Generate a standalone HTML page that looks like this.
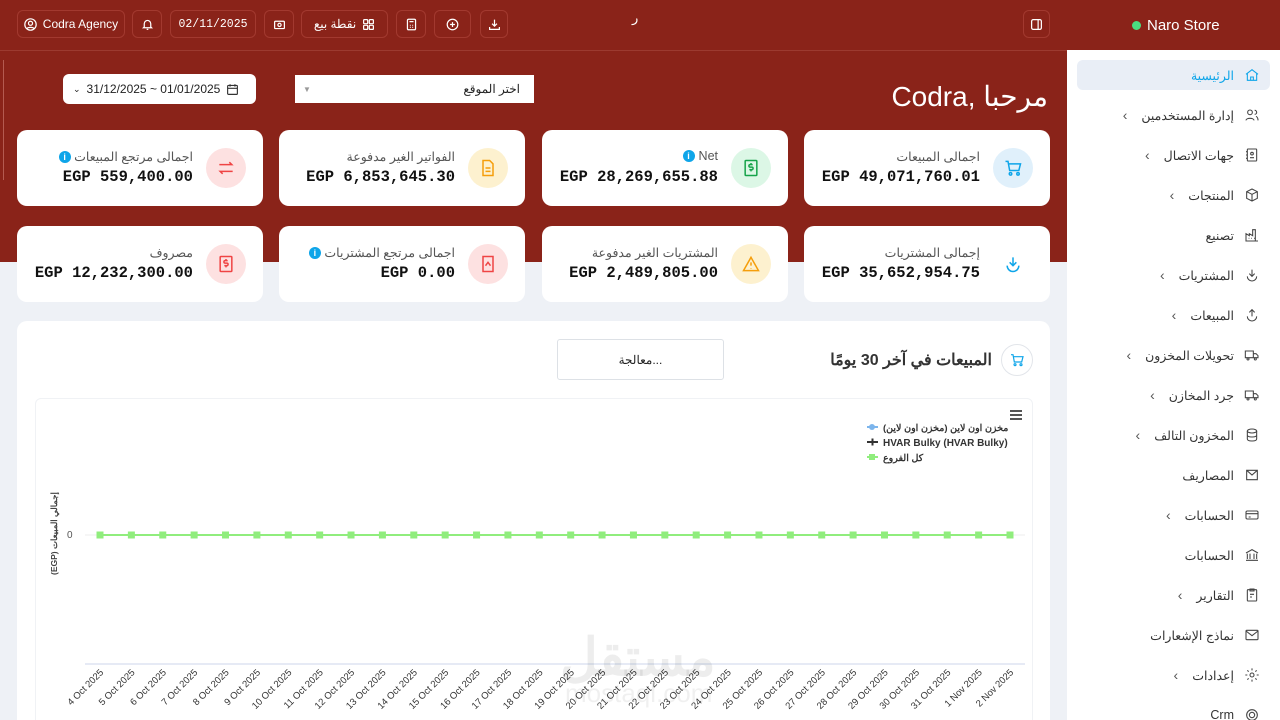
<!DOCTYPE html><html><head><meta charset="utf-8"><style>
*{box-sizing:border-box;margin:0;padding:0}
html,body{width:1280px;height:720px;overflow:hidden}
body{background:#eef1f6;font-family:"Liberation Sans","Noto Sans CJK SC",sans-serif;position:relative}
.red{position:absolute;left:0;top:0;width:1067px;height:262px;background:#8a2319}
.topline{position:absolute;left:0;top:50px;width:1067px;height:1px;background:#9c3a30}
.tb{position:absolute;top:10px;height:28px;border:1px solid #a2392f;border-radius:6px;color:#fff;font-size:12px;display:flex;align-items:center;justify-content:center;gap:6px}
.side{position:absolute;left:1067px;top:0;width:213px;height:720px;background:#fff}
.sideh{position:absolute;left:1067px;top:0;width:213px;height:50px;background:#8a2319;color:#fff;font-size:15px;display:flex;align-items:center;padding-left:65px}
.dot{width:9px;height:9px;border-radius:50%;background:#4ade80;margin-right:6px}
.mi{position:absolute;left:1077px;width:193px;height:30px;direction:rtl;display:flex;align-items:center;padding-right:10px;font-size:12.5px;color:#333;gap:10px}
.mi svg{width:16px;height:16px;stroke:#444;fill:none;stroke-width:1.6}
.mi .ch{color:#555;margin-right:4px;font-size:14px}
.card{position:absolute;width:246px;height:76px;background:#fff;border-radius:10px;direction:rtl}
.card .ic{position:absolute;right:17px;top:18px;width:40px;height:40px;border-radius:50%;display:flex;align-items:center;justify-content:center}
.card .lb{position:absolute;right:70px;top:19px;font-size:12.5px;color:#555}
.card .vl{position:absolute;right:70px;top:38px;font-size:15.5px;font-weight:bold;font-family:"Liberation Mono",monospace;color:#111;direction:ltr}
.ic svg{width:20px;height:20px;fill:none;stroke-width:1.8}
.info{display:inline-block;width:12px;height:12px;border-radius:50%;background:#0ea5e9;color:#fff;font-size:9px;text-align:center;line-height:12px;font-weight:bold;margin-left:4px;vertical-align:1px}
.panel{position:absolute;left:17px;top:321px;width:1033px;height:399px;background:#fff;border-radius:10px 10px 0 0}
</style></head><body>
<div class="red"></div><div class="topline"></div>
<div style="position:absolute;left:3px;top:60px;width:1px;height:120px;background:#b45a50"></div>
<div class="tb" style="left:17px;width:108px"><svg width="13" height="13" viewBox="0 0 16 16" fill="none" stroke="#fff" stroke-width="1.5"><circle cx="8" cy="8" r="7"/><circle cx="8" cy="6.5" r="2.5"/><path d="M3.5 13c1.5-2 7.5-2 9 0"/></svg>Codra Agency</div>
<div class="tb" style="left:132px;width:30px"><svg width="13" height="13" viewBox="0 0 16 16" fill="none" stroke="#fff" stroke-width="1.5"><path d="M4 11V7a4 4 0 018 0v4l1 1H3zM7 14h2"/></svg></div>
<div class="tb" style="left:170px;width:86px;font-family:'Liberation Mono',monospace;font-size:11.5px">02/11/2025</div>
<div class="tb" style="left:264px;width:30px"><svg width="13" height="13" viewBox="0 0 16 16" fill="none" stroke="#fff" stroke-width="1.5"><rect x="2" y="4" width="12" height="9" rx="1"/><circle cx="8" cy="8.5" r="2"/></svg></div>
<div class="tb" style="left:301px;width:87px">نقطة بيع <svg width="13" height="13" viewBox="0 0 16 16" fill="none" stroke="#fff" stroke-width="1.5"><rect x="2" y="2" width="5" height="5" rx="1"/><rect x="9" y="2" width="5" height="5" rx="1"/><rect x="2" y="9" width="5" height="5" rx="1"/><rect x="9" y="9" width="5" height="5" rx="1"/></svg></div>
<div class="tb" style="left:396px;width:30px"><svg width="13" height="13" viewBox="0 0 16 16" fill="none" stroke="#fff" stroke-width="1.5"><rect x="3" y="1.5" width="10" height="13" rx="1.5"/><path d="M5.5 4.5h5M6 9h1M9 9h1M6 11.5h1M9 11.5h1"/></svg></div>
<div class="tb" style="left:434px;width:37px"><svg width="13" height="13" viewBox="0 0 16 16" fill="none" stroke="#fff" stroke-width="1.5"><circle cx="8" cy="8" r="6.5"/><path d="M8 5v6M5 8h6"/></svg></div>
<div class="tb" style="left:480px;width:28px"><svg width="13" height="13" viewBox="0 0 16 16" fill="none" stroke="#fff" stroke-width="1.5"><path d="M8 2v8M5 7l3 3 3-3M2 11v3h12v-3"/></svg></div>
<div style="position:absolute;left:632px;top:10px;color:#fff;font-size:13px">ر</div>
<div class="tb" style="left:1023px;width:27px"><svg width="13" height="13" viewBox="0 0 16 16" fill="none" stroke="#fff" stroke-width="1.5"><rect x="2" y="2" width="12" height="12" rx="2"/><path d="M10 2v12"/></svg></div>

<div style="position:absolute;left:63px;top:74px;width:193px;height:30px;background:#fff;border-radius:6px;font-size:12px;color:#222;display:flex;align-items:center;gap:6px;padding-left:10px"><span style="font-size:9px">⌄</span>31/12/2025 ~ 01/01/2025 <svg width="13" height="13" viewBox="0 0 16 16" fill="none" stroke="#333" stroke-width="1.4"><rect x="2" y="3" width="12" height="11" rx="1"/><path d="M2 6.5h12M5 1.5v3M11 1.5v3"/></svg></div>
<div style="position:absolute;left:295px;top:75px;width:239px;height:28px;background:#fff;font-size:12px;color:#222;direction:rtl;display:flex;align-items:center;justify-content:space-between;padding:0 14px 0 8px"><span>اختر الموقع</span><span style="font-size:8px;color:#999">▼</span></div>
<div style="position:absolute;right:232px;top:80px;color:#fff;font-size:28px;direction:rtl">مرحبا ,Codra</div>

<div class="card" style="left:804px;top:130px"><div class="ic" style="background:#e0f0fb"><svg viewBox="0 0 24 24" stroke="#0ea5e9"><path d="M3 4h3l2 11h11l2-8H7"/><circle cx="9" cy="19" r="1.5"/><circle cx="18" cy="19" r="1.5"/></svg></div><div class="lb">اجمالى المبيعات</div><div class="vl">EGP 49,071,760.01</div></div>
<div class="card" style="left:542px;top:130px"><div class="ic" style="background:#dcf7e6"><svg viewBox="0 0 24 24" stroke="#16a34a"><rect x="5" y="3" width="14" height="18" rx="1"/><path d="M14 8h-3a1.5 1.5 0 000 3h2a1.5 1.5 0 010 3h-3M12 6v2M12 14v2"/></svg></div><div class="lb">Net<span class="info" style="margin-left:0;margin-right:4px">i</span></div><div class="vl">EGP 28,269,655.88</div></div>
<div class="card" style="left:279px;top:130px"><div class="ic" style="background:#fdf1cf"><svg viewBox="0 0 24 24" stroke="#f59e0b"><path d="M6 3h8l4 4v14H6z"/><path d="M9 12h6M9 16h6"/></svg></div><div class="lb">الفواتير الغير مدفوعة</div><div class="vl">EGP 6,853,645.30</div></div>
<div class="card" style="left:17px;top:130px"><div class="ic" style="background:#fde1e1"><svg viewBox="0 0 24 24" stroke="#ef4444"><path d="M4 8h15l-3-3M20 16H5l3 3"/></svg></div><div class="lb">اجمالى مرتجع المبيعات <span class="info">i</span></div><div class="vl">EGP 559,400.00</div></div>

<div class="card" style="left:804px;top:226px"><div class="ic"><svg viewBox="0 0 24 24" stroke="#0ea5e9"><path d="M12 4v10M8 10l4 4 4-4M5 14a7 7 0 0014 0"/></svg></div><div class="lb">إجمالى المشتريات</div><div class="vl">EGP 35,652,954.75</div></div>
<div class="card" style="left:542px;top:226px"><div class="ic" style="background:#fdf1cf"><svg viewBox="0 0 24 24" stroke="#f59e0b"><path d="M12 4l9 16H3z"/><path d="M12 10v4M12 17v.5"/></svg></div><div class="lb">المشتريات الغير مدفوعة</div><div class="vl">EGP 2,489,805.00</div></div>
<div class="card" style="left:279px;top:226px"><div class="ic" style="background:#fde1e1"><svg viewBox="0 0 24 24" stroke="#ef4444"><path d="M6 3h12v18H6z"/><path d="M9 14l3-4 3 4"/></svg></div><div class="lb">اجمالى مرتجع المشتريات <span class="info">i</span></div><div class="vl">EGP 0.00</div></div>
<div class="card" style="left:17px;top:226px"><div class="ic" style="background:#fde1e1"><svg viewBox="0 0 24 24" stroke="#ef4444"><rect x="5" y="3" width="14" height="18" rx="1"/><path d="M14 8h-3a1.5 1.5 0 000 3h2a1.5 1.5 0 010 3h-3M12 6v2M12 14v2"/></svg></div><div class="lb">مصروف</div><div class="vl">EGP 12,232,300.00</div></div>

<div class="panel"></div>
<div style="position:absolute;left:1001px;top:344px;width:32px;height:32px;border-radius:50%;border:1px solid #e2e5ea;display:flex;align-items:center;justify-content:center"><svg width="16" height="16" viewBox="0 0 24 24" fill="none" stroke="#0ea5e9" stroke-width="1.8"><path d="M3 4h3l2 11h11l2-8H7"/><circle cx="9" cy="19" r="1.5"/><circle cx="18" cy="19" r="1.5"/></svg></div>
<div style="position:absolute;right:288px;top:350px;font-size:16px;font-weight:bold;color:#333;direction:rtl">المبيعات في آخر 30 يومًا</div>
<div style="position:absolute;left:557px;top:339px;width:167px;height:41px;border:1px solid #dde1e6;border-radius:3px;font-size:12px;color:#222;display:flex;align-items:center;justify-content:center">معالجة...</div>
<div style="position:absolute;left:35px;top:398px;width:998px;height:330px;border:1px solid #f0f2f5;border-radius:6px"></div>
<svg style="position:absolute;left:0;top:0" width="1067" height="720">
<g stroke="#555" stroke-width="2"><path d="M1010 411h12M1010 415h12M1010 419h12"/></g>
<line x1="867" y1="427" x2="878" y2="427" stroke="#7cb5ec" stroke-width="2"/><circle cx="872" cy="427" r="3" fill="#7cb5ec"/>
<line x1="867" y1="442" x2="878" y2="442" stroke="#333" stroke-width="2"/><path d="M869 442h7M872.5 438.5v7" stroke="#333" stroke-width="2"/>
<line x1="867" y1="457" x2="878" y2="457" stroke="#90ed7d" stroke-width="2"/><rect x="869" y="454" width="6" height="6" fill="#90ed7d"/>
<text x="883" y="431" font-size="9.5" font-weight="bold" fill="#333" font-family="Liberation Sans,Noto Sans CJK SC,sans-serif">مخزن اون لاين (مخزن اون لاين)</text>
<text x="883" y="446" font-size="10" font-weight="bold" fill="#333" font-family="Liberation Sans,sans-serif">HVAR Bulky (HVAR Bulky)</text>
<text x="883" y="461" font-size="9.5" font-weight="bold" fill="#333" font-family="Liberation Sans,Noto Sans CJK SC,sans-serif">كل الفروع</text>
<text x="67" y="538" font-size="10" fill="#555" font-family="Liberation Sans,sans-serif">0</text>
<text transform="translate(57,575) rotate(-90)" font-size="8.5" font-weight="bold" fill="#444" font-family="Liberation Sans,Noto Sans CJK SC,sans-serif">(EGP) إجمالي المبيعات</text>
<line x1="85" y1="535" x2="1025" y2="535" stroke="#eee"/>
<line x1="85" y1="664" x2="1025" y2="664" stroke="#ccd6eb"/>
<line x1="100" y1="535" x2="1010" y2="535" stroke="#90ed7d" stroke-width="2"/>
<g fill="#90ed7d" id="pts"></g>
<g id="lbl" font-size="9.5" fill="#333" font-family="Liberation Sans,sans-serif"></g>
</svg>
<div style="position:absolute;left:560px;top:628px;font-size:52px;font-weight:bold;color:rgba(0,0,0,0.07)">مستقل</div>
<div style="position:absolute;left:565px;top:678px;font-size:26px;color:rgba(0,0,0,0.06)">mostaql.com</div>
<div class="side"></div>
<div class="sideh"><span class="dot"></span>Naro Store</div>
<div style="position:absolute;left:1077px;top:60px;width:193px;height:30px;background:#e9eef6;border-radius:6px"></div>
<div id="menu"></div>
<script>
var labels=["4 Oct 2025","5 Oct 2025","6 Oct 2025","7 Oct 2025","8 Oct 2025","9 Oct 2025","10 Oct 2025","11 Oct 2025","12 Oct 2025","13 Oct 2025","14 Oct 2025","15 Oct 2025","16 Oct 2025","17 Oct 2025","18 Oct 2025","19 Oct 2025","20 Oct 2025","21 Oct 2025","22 Oct 2025","23 Oct 2025","24 Oct 2025","25 Oct 2025","26 Oct 2025","27 Oct 2025","28 Oct 2025","29 Oct 2025","30 Oct 2025","31 Oct 2025","1 Nov 2025","2 Nov 2025"];
var P=document.getElementById('pts'),L=document.getElementById('lbl'),ns="http://www.w3.org/2000/svg";
labels.forEach(function(t,i){var x=100+i*(910/29);var r=document.createElementNS(ns,'rect');r.setAttribute('x',x-3.5);r.setAttribute('y',531.5);r.setAttribute('width',7);r.setAttribute('height',7);P.appendChild(r);
var tx=document.createElementNS(ns,'text');tx.setAttribute('text-anchor','end');tx.setAttribute('transform','translate('+(x+4)+',673) rotate(-45)');tx.textContent=t;L.appendChild(tx);});
var items=[["الرئيسية",0,'<path d="M3 11l9-7 9 7M5 10v10h14V10M10 20v-5h4v5"/>',"#0ea5e9"],["إدارة المستخدمين",1,'<circle cx="9" cy="8" r="3.5"/><path d="M3 20c0-4 12-4 12 0M16 5a3 3 0 010 6M18 14c2 1 3 3 3 6"/>'],["جهات الاتصال",1,'<rect x="5" y="3" width="14" height="18" rx="1"/><circle cx="12" cy="10" r="2"/><path d="M9 16h6M3 7h2M3 12h2M3 17h2"/>'],["المنتجات",1,'<path d="M12 3l8 4v10l-8 4-8-4V7zM4 7l8 4 8-4M12 11v10"/>'],["تصنيع",0,'<path d="M3 21V10l5 3V10l5 3V4h4v17zM3 21h18M7 17h1M11 17h1M15 17h1"/>'],["المشتريات",1,'<path d="M12 4v10M8 10l4 4 4-4M5 14a7 7 0 0014 0"/>'],["المبيعات",1,'<path d="M12 14V4M8 8l4-4 4 4M5 14a7 7 0 0014 0"/>'],["تحويلات المخزون",1,'<path d="M2 6h12v10H2zM14 10h4l3 3v3h-7"/><circle cx="6" cy="18" r="1.5"/><circle cx="17" cy="18" r="1.5"/>'],["جرد المخازن",1,'<path d="M2 6h12v10H2zM14 10h4l3 3v3h-7"/><circle cx="6" cy="18" r="1.5"/><circle cx="17" cy="18" r="1.5"/>'],["المخزون التالف",1,'<ellipse cx="12" cy="6" rx="7" ry="3"/><path d="M5 6v12c0 4 14 4 14 0V6M5 12c0 4 14 4 14 0"/>'],["المصاريف",0,'<path d="M4 5h16v14H4zM4 5l8 7 8-7"/>'],["الحسابات",1,'<rect x="3" y="6" width="18" height="12" rx="2"/><path d="M3 10h18M7 15h3"/>'],["الحسابات",0,'<path d="M3 9l9-5 9 5M5 10v8M9 10v8M15 10v8M19 10v8M3 20h18"/>'],["التقارير",1,'<rect x="5" y="4" width="14" height="17" rx="1"/><path d="M9 3h6v3H9zM9 11h6M9 15h3"/>'],["نماذج الإشعارات",0,'<rect x="3" y="5" width="18" height="14" rx="1"/><path d="M3 6l9 7 9-7"/>'],["إعدادات",1,'<circle cx="12" cy="12" r="3"/><path d="M12 2v3M12 19v3M2 12h3M19 12h3M5 5l2 2M17 17l2 2M5 19l2-2M17 7l2-2"/>'],["Crm",0,'<circle cx="12" cy="12" r="8"/><circle cx="12" cy="12" r="4"/>']];
var h='';items.forEach(function(it,i){var c=it[3]||'#444';h+='<div class="mi" style="top:'+(60+i*40)+'px;'+(i==0?'color:#0ea5e9':'')+'"><svg viewBox="0 0 24 24" style="stroke:'+c+'">'+it[2]+'</svg><span>'+it[0]+'</span>'+(it[1]?'<span class="ch">›</span>':'')+'</div>';});
document.getElementById('menu').innerHTML=h;
</script>
</body></html>
